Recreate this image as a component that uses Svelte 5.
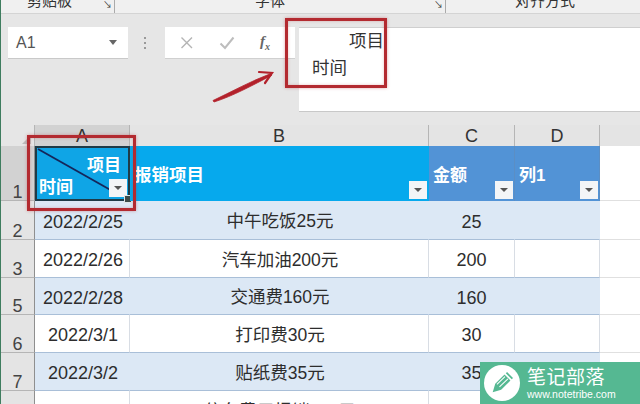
<script lang="ts">
  const rows = [
    { n: "2", date: "2022/2/25", item: "中午吃饭25元", amt: "25", h: 39 },
    { n: "3", date: "2022/2/26", item: "汽车加油200元", amt: "200", h: 38 },
    { n: "5", date: "2022/2/28", item: "交通费160元", amt: "160", h: 37 },
    { n: "6", date: "2022/3/1", item: "打印费30元", amt: "30", h: 38 },
    { n: "7", date: "2022/3/2", item: "贴纸费35元", amt: "35", h: 38 },
    { n: "", date: "", item: "停车费用报销100元", amt: "", h: 38 },
  ];
</script>

{#snippet filter()}
  <span class="filter"><i></i></span>
{/snippet}

<div class="page">
  <div class="ribbon">
    <div class="group clip"><span>剪贴板</span><b class="launch">↘</b></div>
    <div class="group font"><span>字体</span><b class="launch">↘</b></div>
    <div class="group align"><span>对齐方式</span></div>
  </div>

  <div class="fbar">
    <div class="namebox"><span>A1</span><i class="caret"></i></div>
    <div class="dots"><u></u><u></u><u></u></div>
    <div class="actions">
      <svg width="14" height="14" viewBox="0 0 14 14"><path d="M1.500 1.500 12 12M12 1.500 1.500 12" stroke="#b4b4b4" stroke-width="1.400" fill="none" /></svg>
      <svg width="16" height="14" viewBox="0 0 16 14"><path d="M1.500 7.500 6 12 14.500 1.500" stroke="#bdbdbd" stroke-width="2" fill="none" /></svg>
      <span class="fx">f<sub>x</sub></span>
    </div>
    <div class="input">
      <p class="right">项目</p>
      <p>时间</p>
    </div>
  </div>

  <div class="sheet">
    <div class="hd corner"><i></i></div>
    <div class="hd sel">A</div>
    <div class="hd">B</div>
    <div class="hd">C</div>
    <div class="hd">D</div>
    <div class="hd blank"></div>

    <div class="rh sel tall">1</div>
    <div class="th a1">
      <svg class="diag" viewBox="0 0 91 53" preserveAspectRatio="none"><path d="M1 1 74 44" stroke="#15265a" stroke-width="1.800" /></svg>
      <span class="xm">项目</span>
      <span class="sj">时间</span>
      {@render filter()}
      <i class="handle"></i>
    </div>
    <div class="th cyan"><span>报销项目</span>{@render filter()}</div>
    <div class="th"><span>金额</span>{@render filter()}</div>
    <div class="th"><span>列1</span>{@render filter()}</div>
    <div class="cell none"></div>

    {#each rows as r, i}
      <div class="rh" style="height:{r.h}px">{r.n}</div>
      <div class="cell date" class:band={i % 2 === 0}>{r.date}</div>
      <div class="cell item" class:band={i % 2 === 0}>{r.item}</div>
      <div class="cell" class:band={i % 2 === 0}>{r.amt}</div>
      <div class="cell" class:band={i % 2 === 0}></div>
      <div class="cell none"></div>
    {/each}
  </div>

  <div class="redbox one"></div>
  <div class="redbox two"></div>
  <svg class="arrow" width="70" height="40" viewBox="0 0 70 40">
    <path d="M2 32.500C20 24 40 13 60 5.500L60.500 7.500C42 17 22 28 3 34Z" fill="#b3212b" stroke="#b3212b" stroke-width="0.800" />
    <path d="M48 4 61 5 54 15" stroke="#b3212b" stroke-width="2.200" fill="none" stroke-linecap="round" />
  </svg>

  <div class="mark">
    <span class="disc">
      <svg width="22" height="24" viewBox="0 0 26 26">
        <path d="M2 24 5 14 16 3 23 10 12 21Z" fill="#55b892" />
        <path d="M7 14.500 16.500 5.500M10 17.500 20 8" stroke="#fff" stroke-width="1.200" />
        <path d="M17.500 1.500 19 0 26 7 24.500 8.500Z" fill="#55b892" />
      </svg>
    </span>
    <span class="brand">
      <strong>笔记部落</strong>
      <small>www.notetribe.com</small>
    </span>
  </div>
</div>

<style>
  :global(body) {
    margin: 0;
  }

  .page {
    position: relative;
    width: 640px;
    height: 404px;
    overflow: hidden;
    background: #e6e6e6;
    border-left: 1px solid #3f7d5f;
    box-sizing: border-box;
    font-family: "Liberation Sans", "Noto Sans CJK SC", sans-serif;
    color: #2b2b2b;
  }

  .ribbon {
    display: flex;
    height: 13px;
    border-bottom: 1px solid #d4d4d4;
    background: #f0f0f0;
    font-size: 15px;
    line-height: 8px;
    color: #333;
  }

  .group {
    display: flex;
    justify-content: space-between;
    overflow: hidden;
    box-sizing: border-box;
    border-right: 1px solid #aaa;
  }

  .group span {
    margin-top: -3px;
  }

  .launch {
    font-size: 9px;
    font-weight: 400;
    margin-right: 2px;
    line-height: 10px;
  }

  .clip {
    width: 114px;
    padding-left: 26px;
  }

  .font {
    width: 331px;
    padding-left: 140px;
  }

  .align {
    flex: 1;
    padding-left: 69px;
    border: 0;
  }

  .fbar {
    display: flex;
    align-items: flex-start;
    height: 98px;
    padding-top: 13px;
    box-sizing: border-box;
  }

  .namebox {
    display: flex;
    align-items: center;
    justify-content: space-between;
    width: 120px;
    height: 32px;
    margin-left: 7px;
    padding: 0 11px 0 8px;
    box-sizing: border-box;
    background: #fff;
    border-bottom: 1px solid #c9c9c9;
    font-size: 16px;
    color: #555;
  }

  .caret {
    border: 4px solid transparent;
    border-top: 5px solid #666;
    border-bottom: 0;
  }

  .dots {
    display: flex;
    flex-direction: column;
    gap: 3px;
    width: 4px;
    margin: 10px 17px 0 16px;
  }

  .dots u {
    width: 2px;
    height: 2px;
    background: #999;
  }

  .actions {
    display: flex;
    align-items: center;
    gap: 25px;
    width: 130px;
    height: 32px;
    padding-left: 15px;
    box-sizing: border-box;
    background: #fff;
    border-bottom: 1px solid #d0d0d0;
  }

  .fx {
    font-family: "Liberation Serif", serif;
    font-style: italic;
    font-weight: 700;
    font-size: 15px;
    color: #666;
  }

  .fx sub {
    font-size: 10px;
  }

  .input {
    flex: 1;
    height: 85px;
    margin-left: 4px;
    padding: 0 0 0 13px;
    box-sizing: border-box;
    background: #fff;
    border-top: 1px solid #cfcfcf;
    border-bottom: 1px solid #c8c8c8;
    font-size: 17.500px;
    line-height: 27px;
    color: #333;
  }

  .input p {
    margin: 0;
    width: 72px;
  }

  .right {
    text-align: right;
  }

  .sheet {
    display: grid;
    grid-template-columns: 34px 95px 299px 86px 85px 1fr;
    margin-top: 13px;
  }

  .hd {
    height: 21px;
    background: #e4e4e4;
    border-right: 1px solid #b5b5b5;
    box-sizing: border-box;
    text-align: center;
    font-size: 18px;
    line-height: 23px;
    color: #333;
  }

  .hd.sel {
    background: #d2d2d2;
  }

  .corner {
    position: relative;
    background: #e6e6e6;
  }

  .corner i {
    position: absolute;
    right: 3px;
    bottom: 2px;
    border-left: 9px solid transparent;
    border-bottom: 9px solid #bcbcbc;
  }

  .blank {
    border: 0;
  }

  .rh {
    display: flex;
    align-items: flex-end;
    justify-content: center;
    box-sizing: border-box;
    padding-bottom: 1px;
    background: #e4e4e4;
    border-right: 1px solid #8f8f8f;
    border-bottom: 1px solid #b5b5b5;
    font-size: 18px;
    line-height: 14px;
    color: #444;
  }

  .rh.sel {
    background: #d2d2d2;
  }

  .tall {
    height: 55px;
  }

  .th {
    position: relative;
    display: flex;
    align-items: center;
    padding: 0 0 0 4px;
    box-sizing: border-box;
    background: #5293d6;
    border-right: 1px solid #5b8ec4;
    font-size: 17px;
    font-weight: 700;
    color: #fff;
  }

  .cyan {
    background: #06a9ed;
    border-color: #06a9ed;
    font-size: 17.500px;
  }

  .a1 {
    background: #0fa5e6;
    border: 2px solid #1f3b47;
    padding: 0;
  }

  .diag {
    position: absolute;
    inset: 0;
    width: 100%;
    height: 100%;
  }

  .xm {
    position: absolute;
    top: 3px;
    right: 7px;
  }

  .sj {
    position: absolute;
    left: 2px;
    top: 25px;
  }

  .handle {
    position: absolute;
    right: -4px;
    bottom: -4px;
    width: 6px;
    height: 6px;
    background: #3d4a48;
    border: 1px solid #dfe6e6;
  }

  .filter {
    position: absolute;
    right: 1px;
    bottom: 2px;
    display: flex;
    align-items: center;
    justify-content: center;
    width: 18px;
    height: 18px;
    background: #f3f5f7;
  }

  .filter i {
    border: 4px solid transparent;
    border-top: 4px solid #555;
    border-bottom: 0;
  }

  .cell {
    display: flex;
    align-items: center;
    justify-content: center;
    box-sizing: border-box;
    padding-top: 3px;
    background: #fff;
    border-right: 1px solid #d8dde4;
    border-bottom: 1px solid #a9bfd8;
    font-size: 18px;
    line-height: 20px;
    color: #2d2d2d;
    white-space: nowrap;
  }

  .date {
    padding-left: 2px;
  }

  .item {
    padding: 2px 0 0 2px;
    font-size: 17.500px;
  }

  .band {
    background: #dce8f5;
    border-right-color: #dce8f5;
  }

  .none {
    border-right: 0;
    border-bottom: 1px solid #e0e0e0;
  }

  .redbox {
    position: absolute;
    box-sizing: border-box;
    border: 3px solid #b32a30;
    box-shadow: 0 0 3px rgba(179, 42, 48, 0.4), inset 0 0 3px rgba(179, 42, 48, 0.3);
  }

  .one {
    left: 284px;
    top: 18px;
    width: 102px;
    height: 70px;
  }

  .two {
    left: 26px;
    top: 135px;
    width: 109px;
    height: 76px;
  }

  .arrow {
    position: absolute;
    left: 210px;
    top: 68px;
  }

  .mark {
    position: absolute;
    right: 0;
    bottom: 0;
    display: flex;
    align-items: center;
    gap: 7px;
    width: 160px;
    height: 42px;
    padding-left: 4px;
    box-sizing: border-box;
    background: #55b892;
    color: #fff;
  }

  .disc {
    display: flex;
    align-items: center;
    justify-content: center;
    width: 36px;
    height: 36px;
    border-radius: 50%;
    background: #fff;
  }

  .brand {
    display: flex;
    flex-direction: column;
  }

  .brand strong {
    font-size: 19px;
    font-weight: 400;
    letter-spacing: 0.500px;
    line-height: 22px;
  }

  .brand small {
    font-size: 10.500px;
    line-height: 11px;
  }
</style>
